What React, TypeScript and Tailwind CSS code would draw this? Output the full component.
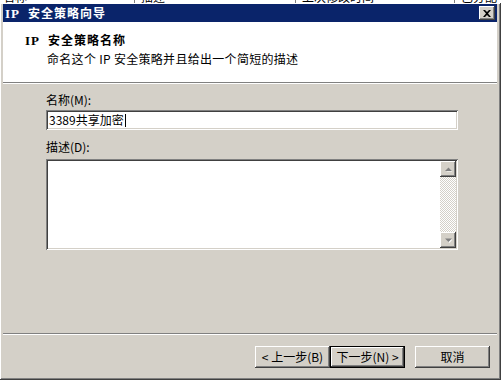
import React from 'react';

const font = 'font-["SimSun","Noto_Sans_CJK_SC",sans-serif]';

const raised =
  'shadow-[inset_-1px_-1px_#404040,inset_1px_1px_#ffffff,inset_-2px_-2px_#808080,inset_2px_2px_#d4d0c8]';
const sunken =
  'shadow-[inset_1px_1px_#808080,inset_-1px_-1px_#ffffff,inset_2px_2px_#404040,inset_-2px_-2px_#d4d0c8]';

const ScrollButton: React.FC<{ up?: boolean }> = ({ up }) => (
  <div className={`w-4 h-4 bg-[#d4d0c8] flex items-center justify-center ${raised}`}>
    <svg width="7" height="5" viewBox="0 0 7 5">
      {up ? (
        <>
          <polygon points="1,4 4,1 7,4" fill="#ffffff" transform="translate(0.5,0.5)" />
          <polygon points="0,4 3.5,0.5 7,4" fill="#808080" />
        </>
      ) : (
        <>
          <polygon points="1,1 4,4.5 7,1" fill="#ffffff" transform="translate(0.5,0.5)" />
          <polygon points="0,0.5 3.5,4 7,0.5" fill="#808080" />
        </>
      )}
    </svg>
  </div>
);

const Button: React.FC<{ label: string; isDefault?: boolean }> = ({ label, isDefault }) => (
  <div
    className={`w-[75px] h-[22px] bg-[#d4d0c8] flex items-center justify-center text-[12px] text-black ${
      isDefault
        ? 'shadow-[inset_0_0_0_1px_#000000,inset_-2px_-2px_#404040,inset_2px_2px_#ffffff,inset_-3px_-3px_#808080]'
        : raised
    }`}
  >
    {label}
  </div>
);

// bold caption: serif "IP" followed by CJK text, as in the classic dialog font
const BoldTitle: React.FC<{ text: string; className?: string }> = ({ text, className }) => (
  <span className={`font-bold text-[12px] leading-[12px] tracking-[1px] ${className ?? ''}`}>
    <span className="font-['Liberation_Serif',serif] text-[13px]">IP</span>
    <span className="ml-[8px]">{text}</span>
  </span>
);

const App: React.FC = () => {
  return (
    <div className={`w-[503px] h-[382px] bg-white overflow-hidden ${font}`}>
      {/* list header behind the dialog */}
      <div className="h-[3px] flex overflow-hidden text-[12px] leading-[12px] text-black">
        <div className="w-[135px] border-r border-[#808080] pl-[3px] -mt-[9px]">名称</div>
        <div className="w-[161px] border-r border-[#808080] pl-[6px] -mt-[9px]">描述</div>
        <div className="w-[159px] border-r border-[#808080] pl-[6px] -mt-[9px]">上次修改时间</div>
        <div className="flex-1 pl-[6px] -mt-[9px]">已分配</div>
      </div>

      <div className={`w-[501px] h-[377px] bg-[#d4d0c8] pt-[1px] pl-[3px] pr-[4px] pb-[4px] flex flex-col ${raised}`}>
        {/* title bar */}
        <div className="h-[18px] bg-[#0a246a] flex items-center justify-between pl-[2px] pr-[2px]">
          <BoldTitle text="安全策略向导" className="text-white" />
          <div className={`w-4 h-[14px] bg-[#d4d0c8] flex items-center justify-center ${raised}`}>
            <svg width="8" height="7" viewBox="0 0 8 7">
              <path d="M0 0h2l2 2 2-2h2L5 3.5 8 7H6L4 5 2 7H0l3-3.5z" fill="#000000" />
            </svg>
          </div>
        </div>

        {/* header */}
        <div className="h-[60px] bg-white pt-[12px] text-[12px] leading-[12px] text-black">
          <div className="pl-[22px]">
            <BoldTitle text="安全策略名称" />
          </div>
          <div className="pl-[44px] mt-[6px] tracking-[0.3px]">命名这个 IP 安全策略并且给出一个简短的描述</div>
        </div>
        <div className="h-px bg-[#808080]" />
        <div className="h-px bg-white" />

        {/* body */}
        <div className="h-[249px] pl-[43px] pt-[10px] text-[12px] leading-[12px] text-black">
          <div>名称(M):</div>
          <div className={`mt-[4px] w-[412px] h-[20px] bg-white flex items-center pl-[3px] ${sunken}`}>
            <span>3389共享加密</span>
            <span className="w-px h-[13px] bg-black ml-px" />
          </div>
          <div className="mt-[11px]">描述(D):</div>
          <div className={`mt-[6px] w-[412px] h-[91px] bg-white flex justify-end p-[2px] ${sunken}`}>
            <div className="w-4 flex flex-col justify-between bg-[repeating-conic-gradient(#d4d0c8_0_25%,#ffffff_0_50%)] bg-[length:2px_2px]">
              <ScrollButton up />
              <ScrollButton />
            </div>
          </div>
        </div>
        <div className="h-px bg-[#808080]" />
        <div className="h-px bg-white" />

        {/* buttons */}
        <div className="flex-1 flex justify-end items-start pt-[11px] pr-[7px]">
          <Button label="< 上一步(B)" />
          <Button label="下一步(N) >" isDefault />
          <div className="w-[10px]" />
          <Button label="取消" />
        </div>
      </div>
    </div>
  );
};

export default App;
